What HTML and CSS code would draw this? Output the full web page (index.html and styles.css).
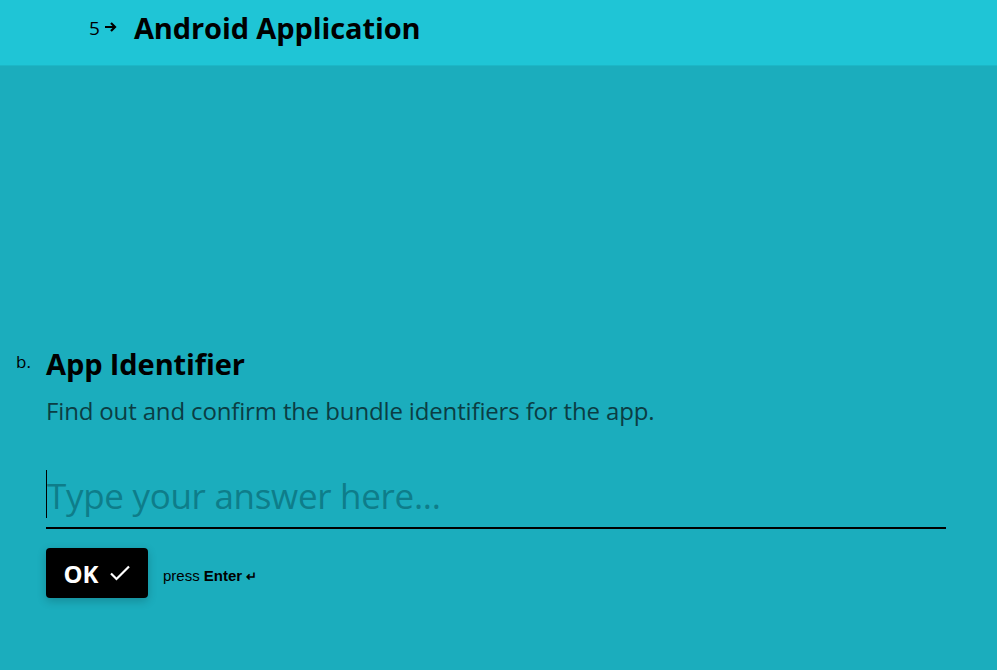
FILE: index.html
```html
<!DOCTYPE html>
<html>
<head>
<meta charset="utf-8">
<link rel="stylesheet" href="styles.css">
</head>
<body>
<header class="topbar">
  <div class="topbar-inner">
    <span class="qnum">5</span>
    <svg class="arrow" width="13" height="12" viewBox="0 0 13 12"><path d="M1 6h10M7 2L11 6 7 10" fill="none" stroke="#000" stroke-width="2.2"/></svg>
    <h1 class="title">Android Application</h1>
  </div>
</header>
<main class="content">
  <section class="question">
    <span class="letter">b.</span>
    <div class="qbody">
      <h2 class="qtitle">App Identifier</h2>
      <p class="desc">Find out and confirm the bundle identifiers for the app.</p>
      <div class="field">
        <span class="caret"></span>
        <span class="placeholder">Type your answer here...</span>
      </div>
      <div class="actions">
        <button class="ok">OK
          <svg width="22" height="18" viewBox="0 0 22 18"><path d="M2 9.5l5.5 5.5L20 2.5" fill="none" stroke="#fff" stroke-width="2.2"/></svg>
        </button>
        <span class="hint">press <b>Enter</b> <span class="enter">↵</span></span>
      </div>
    </div>
  </section>
</main>
</body>
</html>
```
FILE: styles.css
```css
html, body { margin: 0; padding: 0; }
body {
  background: #1badbd;
  font-family: "Open Sans", "Noto Sans", sans-serif;
  color: #000;
  width: 997px;
  height: 670px;
  overflow: hidden;
}
.topbar {
  background: #1fc5d6;
  height: 66px;
  border-bottom: 1px solid #1cb7c7;
  box-sizing: border-box;
}
.topbar-inner {
  display: flex;
  align-items: center;
  padding-left: 89px;
  height: 55px;
}
.qnum { font-size: 19px; line-height: 1; margin-right: 4px; margin-top: 2px; }
.arrow { margin-right: 17px; margin-top: -1px; }
.title { margin: 0; font-size: 29px; font-weight: 700; letter-spacing: -0.1px; }
.content { padding-top: 279px; }
.question { display: flex; padding-left: 16px; }
.letter { width: 30px; font-size: 17px; padding-top: 5px; }
.qbody { width: 900px; }
.qtitle { margin: 0; font-size: 29px; font-weight: 700; line-height: 38px; letter-spacing: -0.1px; }
.desc { margin: 12px 0 0; font-size: 24px; line-height: 32px; color: #0b3d44; letter-spacing: -0.15px; }
.field {
  margin-top: 43px;
  height: 57px;
  border-bottom: 2px solid #000;
  display: flex;
  align-items: center;
  position: relative;
}
.caret { position: absolute; left: 0; top: 0; width: 1px; height: 48px; background: #000; }
.placeholder { font-size: 35px; color: #0e7d8a; padding-left: 1px; letter-spacing: -0.3px; margin-top: -6px; }
.actions { display: flex; align-items: center; margin-top: 19px; }
.ok {
  background: #000;
  color: #fff;
  border: none;
  border-radius: 4px;
  height: 50px;
  width: 102px;
  font-family: inherit;
  font-size: 24px;
  font-weight: 700;
  display: flex;
  align-items: center;
  justify-content: center;
  gap: 10px;
  box-shadow: 0 3px 10px rgba(0,0,0,0.2);
  padding: 0;
}
.hint { margin-left: 15px; font-family: "Liberation Sans", Arial, sans-serif; font-size: 15px; margin-top: 4px; }
.enter { font-size: 13px; font-weight: 700; }
```
